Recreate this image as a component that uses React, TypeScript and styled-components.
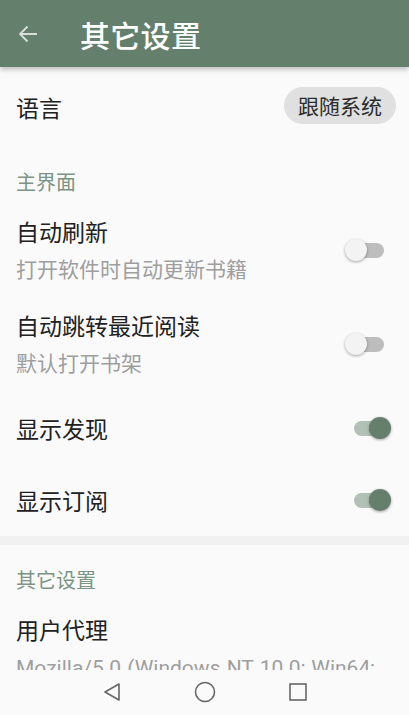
import React from "react"
import styled, { createGlobalStyle } from "styled-components"

const GlobalStyle = createGlobalStyle`
  html, body {
    margin: 0;
    padding: 0;
    background: #fafafa;
  }
  body {
    font-family: "Noto Sans CJK SC", Roboto, "Noto Sans", sans-serif;
  }
`

const PRIMARY = "#657f6d"

export const S = {
  Screen: styled.div`
    width: 409px;
    height: 715px;
    display: flex;
    flex-direction: column;
    background: #fafafa;
    overflow: hidden;
  `,

  Toolbar: styled.header`
    position: relative;
    z-index: 2;
    flex: 0 0 67px;
    display: flex;
    align-items: center;
    background: ${PRIMARY};
    box-shadow: 0 2px 6px rgba(0, 0, 0, 0.28);
  `,

  BackButton: styled.div`
    width: 20px;
    height: 20px;
    margin-left: 18px;
    margin-right: 42px;
    display: flex;
    align-items: center;
    justify-content: center;
  `,

  Title: styled.h1`
    margin: 0;
    font-size: 30px;
    font-weight: 500;
    color: #ffffff;
    line-height: 1;
    letter-spacing: 0.3px;
  `,

  Content: styled.main`
    flex: 1;
    overflow: hidden;
  `,

  Row: styled.div<{ $height?: number }>`
    display: flex;
    align-items: center;
    justify-content: space-between;
    padding: 0 13px 0 16px;
    min-height: ${(p) => p.$height ?? 72}px;
    box-sizing: border-box;
  `,

  TwoLineRow: styled.div`
    display: flex;
    align-items: center;
    justify-content: space-between;
    padding: 12px 13px 13px 16px;
    box-sizing: border-box;
    min-height: 94px;
  `,

  Texts: styled.div`
    display: flex;
    flex-direction: column;
    min-width: 0;
  `,

  ItemTitle: styled.div`
    font-size: 23px;
    line-height: 30px;
    color: #212121;
    white-space: nowrap;
  `,

  Summary: styled.div`
    margin-top: 9px;
    font-size: 21px;
    line-height: 30px;
    color: #9e9e9e;
    font-family: Roboto, "Noto Sans CJK SC", sans-serif;
    word-spacing: 1px;
  `,

  Category: styled.div`
    padding: 24px 16px 11px;
    font-size: 20px;
    line-height: 22px;
    color: #7b9483;
  `,

  Band: styled.div`
    height: 9px;
    background: #f1f1f1;
  `,

  Chip: styled.div`
    height: 37px;
    padding: 0 14px;
    border-radius: 19px;
    background: #e0e0e0;
    color: #2c2c2c;
    font-size: 21px;
    line-height: 37px;
    margin-top: -3px;
  `,

  SwitchTrack: styled.div<{ $on: boolean }>`
    position: relative;
    width: 30px;
    height: 15px;
    margin-right: 12px;
    border-radius: 8px;
    background: ${(p) => (p.$on ? "#b3c0b7" : "#bdbdbd")};
    flex-shrink: 0;
  `,

  SwitchThumb: styled.div<{ $on: boolean }>`
    position: absolute;
    top: -4px;
    left: ${(p) => (p.$on ? "15px" : "-9px")};
    width: 22px;
    height: 22px;
    border-radius: 50%;
    background: ${(p) => (p.$on ? PRIMARY : "#f3f3f3")};
    box-shadow: 0 1px 3px rgba(0, 0, 0, 0.35);
  `,

  NavBar: styled.nav`
    flex: 0 0 45px;
    display: flex;
    justify-content: center;
    align-items: center;
    background: #fafafa;
    position: relative;
    z-index: 1;
  `,

  NavSlot: styled.div`
    width: 93px;
    display: flex;
    justify-content: center;
    align-items: center;
    padding-bottom: 2px;
  `,
}

const Switch = ({ on }: { on: boolean }) => (
  <S.SwitchTrack $on={on}>
    <S.SwitchThumb $on={on} />
  </S.SwitchTrack>
)

const BackArrow = () => (
  <svg width="20" height="20" viewBox="0 0 20 20">
    <path
      d="M19 10H2M9.5 2.5L2 10l7.5 7.5"
      fill="none"
      stroke="rgba(255,255,255,0.75)"
      strokeWidth="1.8"
    />
  </svg>
)

export default function App() {
  return (
    <>
      <GlobalStyle />
      <S.Screen>
        <S.Toolbar>
          <S.BackButton>
            <BackArrow />
          </S.BackButton>
          <S.Title>其它设置</S.Title>
        </S.Toolbar>

        <S.Content>
          <S.Row $height={80}>
            <S.ItemTitle>语言</S.ItemTitle>
            <S.Chip>跟随系统</S.Chip>
          </S.Row>

          <S.Category>主界面</S.Category>

          <S.TwoLineRow>
            <S.Texts>
              <S.ItemTitle>自动刷新</S.ItemTitle>
              <S.Summary>打开软件时自动更新书籍</S.Summary>
            </S.Texts>
            <Switch on={false} />
          </S.TwoLineRow>

          <S.TwoLineRow>
            <S.Texts>
              <S.ItemTitle>自动跳转最近阅读</S.ItemTitle>
              <S.Summary>默认打开书架</S.Summary>
            </S.Texts>
            <Switch on={false} />
          </S.TwoLineRow>

          <S.Row>
            <S.ItemTitle>显示发现</S.ItemTitle>
            <Switch on />
          </S.Row>

          <S.Row>
            <S.ItemTitle>显示订阅</S.ItemTitle>
            <Switch on />
          </S.Row>

          <S.Band />

          <S.Category>其它设置</S.Category>

          <S.TwoLineRow>
            <S.Texts>
              <S.ItemTitle>用户代理</S.ItemTitle>
              <S.Summary>Mozilla/5.0 (Windows NT 10.0; Win64; x64)</S.Summary>
            </S.Texts>
          </S.TwoLineRow>
        </S.Content>

        <S.NavBar>
          <S.NavSlot>
            <svg width="20" height="20" viewBox="0 0 20 20">
              <path d="M17 2L3 10l14 8z" fill="none" stroke="#666" strokeWidth="1.6" strokeLinejoin="round" />
            </svg>
          </S.NavSlot>
          <S.NavSlot>
            <svg width="22" height="22" viewBox="0 0 22 22">
              <circle cx="11" cy="11" r="9.5" fill="none" stroke="#666" strokeWidth="1.6" />
            </svg>
          </S.NavSlot>
          <S.NavSlot>
            <svg width="20" height="20" viewBox="0 0 20 20">
              <rect x="2" y="2" width="16" height="16" fill="none" stroke="#666" strokeWidth="1.6" />
            </svg>
          </S.NavSlot>
        </S.NavBar>
      </S.Screen>
    </>
  )
}
